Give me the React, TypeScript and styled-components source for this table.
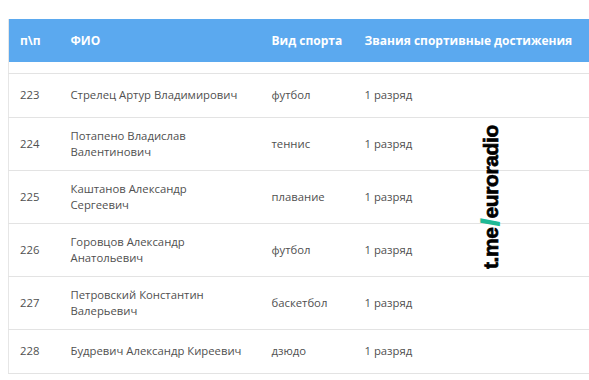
import styled, { createGlobalStyle } from "styled-components";

const GlobalStyle = createGlobalStyle`
  body {
    margin: 0;
    background: #fff;
    overflow: hidden;
    font-family: "Open Sans", "Liberation Sans", sans-serif;
  }
`;

type Row = {
  num: string;
  name: string[];
  sport: string;
  rank: string;
};

const rows: Row[] = [
  { num: "223", name: ["Стрелец Артур Владимирович"], sport: "футбол", rank: "1 разряд" },
  { num: "224", name: ["Потапено Владислав", "Валентинович"], sport: "теннис", rank: "1 разряд" },
  { num: "225", name: ["Каштанов Александр", "Сергеевич"], sport: "плавание", rank: "1 разряд" },
  { num: "226", name: ["Горовцов Александр", "Анатольевич"], sport: "футбол", rank: "1 разряд" },
  { num: "227", name: ["Петровский Константин", "Валерьевич"], sport: "баскетбол", rank: "1 разряд" },
  { num: "228", name: ["Будревич Александр Киреевич"], sport: "дзюдо", rank: "1 разряд" },
];

const Page = styled.div`
  position: relative;
  padding: 19px 0 0 8px;
  width: 620px;
`;

const Table = styled.table`
  width: 100%;
  border-collapse: collapse;
  table-layout: fixed;
  border-left: 1px solid #e6e6e6;
`;

const HeadCell = styled.th<{ w?: number }>`
  box-sizing: border-box;
  width: ${(p) => (p.w ? `${p.w}px` : "auto")};
  height: 43px;
  padding: 0 0 0 11px;
  background: #5ba9ef;
  color: #fff;
  font-size: 12px;
  font-weight: 700;
  text-align: left;
  white-space: nowrap;
`;

const Spacer = styled.tr`
  height: 11px;
  border-bottom: 1px solid #e3e3e3;
`;

const BodyRow = styled.tr`
  height: 44px;
  border-bottom: 1px solid #e3e3e3;
`;

const Cell = styled.td`
  padding: 10px 11px;
  color: #505050;
  font-size: 11.3px;
  line-height: 16px;
  vertical-align: middle;
`;

const Watermark = styled.div`
  position: absolute;
  left: 480px;
  top: 121px;
  width: 148px;
  transform-origin: 0 0;
  transform: translate(0, 148px) rotate(-90deg);
  font-family: "Liberation Sans", Arial, sans-serif;
  font-weight: 700;
  font-size: 21px;
  line-height: 21px;
  color: #000;
  white-space: nowrap;
  letter-spacing: -0.4px;
  -webkit-text-stroke: 0.7px #000;
`;

const Slash = styled.span`
  display: inline-block;
  font-size: 23px;
  margin: 0 1px 0 2px;
  color: #1fb995;
  -webkit-text-stroke: 1.6px #1fb995;
  transform: translateY(1px);
`;

export default function App() {
  return (
    <Page>
      <GlobalStyle />
      <Table>
        <thead>
          <tr>
            <HeadCell w={51}>п\п</HeadCell>
            <HeadCell w={201}>ФИО</HeadCell>
            <HeadCell w={93}>Вид спорта</HeadCell>
            <HeadCell>Звания спортивные достижения</HeadCell>
          </tr>
        </thead>
        <tbody>
          <Spacer>
            <td colSpan={4} />
          </Spacer>
          {rows.map((r) => (
            <BodyRow key={r.num}>
              <Cell>{r.num}</Cell>
              <Cell>
                {r.name.map((n, i) => (
                  <div key={i}>{n}</div>
                ))}
              </Cell>
              <Cell>{r.sport}</Cell>
              <Cell>{r.rank}</Cell>
            </BodyRow>
          ))}
        </tbody>
      </Table>
      <Watermark>
        t.me<Slash>/</Slash>euroradio
      </Watermark>
    </Page>
  );
}
